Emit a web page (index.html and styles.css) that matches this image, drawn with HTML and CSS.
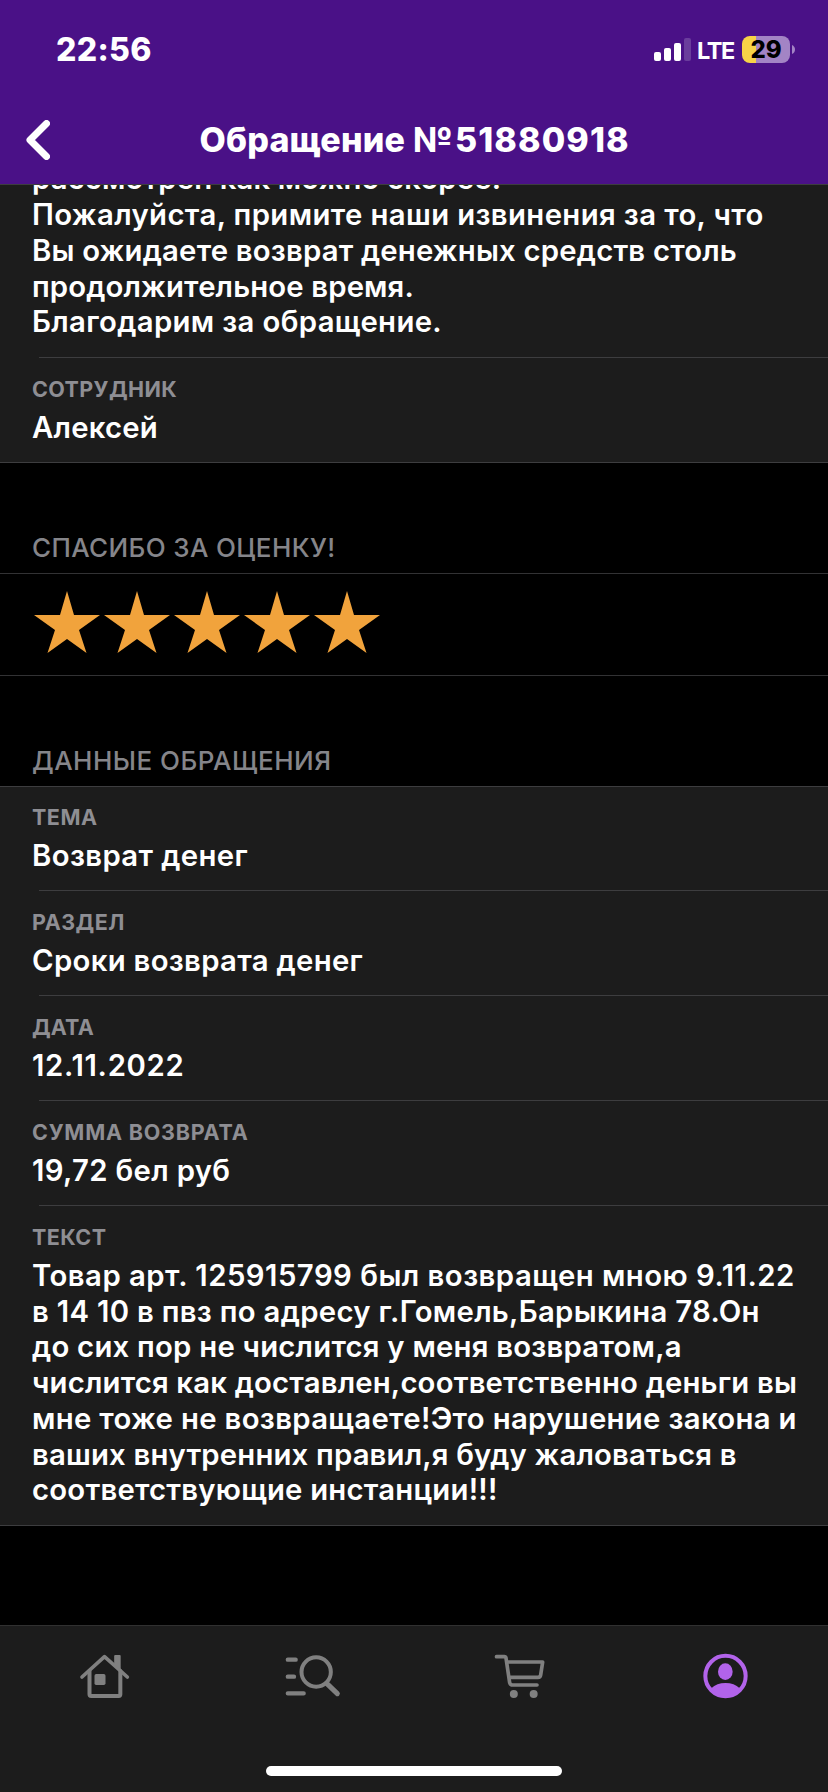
FILE: index.html
```html
<!DOCTYPE html>
<html lang="ru">
<head>
<meta charset="utf-8">
<title>Обращение №51880918</title>
<link rel="stylesheet" href="styles.css">
</head>
<body>
<div class="screen">
  <header class="header">
    <div class="status">
      <span class="time">22:56</span>
      <div class="status-right">
        <svg class="signal" viewBox="0 0 37 23"><g fill="#fff"><rect y="14" width="7" height="9" rx="2"/><rect x="10" y="10" width="7" height="13" rx="2"/><rect x="20" y="5" width="7" height="18" rx="2"/></g><rect x="30" width="7" height="23" rx="2" fill="#6a3d9c"/></svg>
        <span class="lte">LTE</span>
        <span class="battery"><span class="level">29</span></span>
        <svg class="nub" viewBox="0 0 3 9"><path d="M0 0Q3 1.5 3 4.5T0 9Z" fill="#a384c5"/></svg>
      </div>
    </div>
    <div class="titlebar">
      <svg class="back" viewBox="0 0 24 40"><path d="M20.500 3.500L4 20L20.500 36.500" fill="none" stroke="#fff" stroke-width="7" stroke-linecap="round" stroke-linejoin="round"/></svg>
      <h1 class="title"><span class="word">Обращение </span><span class="sign">№</span><span class="digits">51880918</span></h1>
    </div>
  </header>
  <main class="content">
    <section class="card reply">
      <div class="message">
        <span class="line r1">рассмотрен как можно скорее.</span>
        <span class="line r2">Пожалуйста, примите наши извинения за то, что</span>
        <span class="line r3">Вы ожидаете возврат денежных средств столь</span>
        <span class="line r4">продолжительное время.</span>
        <span class="line r5">Благодарим за обращение.</span>
      </div>
      <div class="row"><div class="label l1">СОТРУДНИК</div><div class="value"><span class="line v1">Алексей</span></div></div>
    </section>
    <h2 class="heading thanks">СПАСИБО ЗА ОЦЕНКУ!</h2>
    <div class="rating">
      <svg class="star" viewBox="0 0 66 62"><path d="M33 0L40 24H66L45 39L52.500 62L33 48L13.500 62L21 39L0 24H26Z"/></svg>
      <svg class="star" viewBox="0 0 66 62"><path d="M33 0L40 24H66L45 39L52.500 62L33 48L13.500 62L21 39L0 24H26Z"/></svg>
      <svg class="star" viewBox="0 0 66 62"><path d="M33 0L40 24H66L45 39L52.500 62L33 48L13.500 62L21 39L0 24H26Z"/></svg>
      <svg class="star" viewBox="0 0 66 62"><path d="M33 0L40 24H66L45 39L52.500 62L33 48L13.500 62L21 39L0 24H26Z"/></svg>
      <svg class="star" viewBox="0 0 66 62"><path d="M33 0L40 24H66L45 39L52.500 62L33 48L13.500 62L21 39L0 24H26Z"/></svg>
    </div>
    <h2 class="heading data">ДАННЫЕ ОБРАЩЕНИЯ</h2>
    <section class="card details">
      <div class="row first"><div class="label l2">ТЕМА</div><div class="value"><span class="line v2">Возврат денег</span></div></div>
      <div class="row"><div class="label l3">РАЗДЕЛ</div><div class="value"><span class="line v3">Сроки возврата денег</span></div></div>
      <div class="row"><div class="label l4">ДАТА</div><div class="value"><span class="line v4">12.11.2022</span></div></div>
      <div class="row"><div class="label l5">СУММА ВОЗВРАТА</div><div class="value"><span class="line v5">19,72 бел руб</span></div></div>
      <div class="row"><div class="label l6">ТЕКСТ</div><div class="value">
        <span class="line t1">Товар арт. 125915799 был возвращен мною 9.11.22</span>
        <span class="line t2">в 14 10 в пвз по адресу г.Гомель,Барыкина 78.Он</span>
        <span class="line t3">до сих пор не числится у меня возвратом,а</span>
        <span class="line t4">числится как доставлен,соответственно деньги вы</span>
        <span class="line t5">мне тоже не возвращаете!Это нарушение закона и</span>
        <span class="line t6">ваших внутренних правил,я буду жаловаться в</span>
        <span class="line t7">соответствующие инстанции!!!</span>
      </div></div>
    </section>
  </main>
  <nav class="tabbar">
    <div class="tabs">
      <div class="tab"><svg class="icon" viewBox="0 0 180 144"><path d="M24 78L91.500 17L160 78" stroke-width="11"/><path d="M46.500 60V130Q46.500 135 51.500 135H134Q139 135 139 130V60" stroke-width="12"/><path class="solid" d="M120.500 15q0-3 3-3h13.500q3 0 3 3v47l-19.500-19z"/><rect class="solid" x="61.500" y="69" width="33" height="33" rx="5"/></svg></div>
      <div class="tab"><svg class="icon" viewBox="0 0 180 144"><circle cx="105.500" cy="63" r="44" stroke-width="12"/><path d="M137 97L169 128" stroke-width="15"/><path d="M20.500 26H44M20.500 77H39M20.500 127H68" stroke-width="13"/></svg></div>
      <div class="tab"><svg class="icon" viewBox="0 0 180 144"><path d="M25.500 17H49Q53 17 54 21L65 95Q67 102 74 102H147M57 33H164L158 72Q157 79 150 79H63" stroke-width="11"/><circle class="solid" cx="77.500" cy="129" r="12"/><circle class="solid" cx="137" cy="129" r="12"/></svg></div>
      <div class="tab active"><svg class="icon" viewBox="0 0 180 144"><circle cx="91.500" cy="75" r="60.500" stroke-width="12"/><ellipse class="solid" cx="91" cy="62" rx="22" ry="25"/><path class="solid" d="M49 112Q65 96 91.500 96T134 112Q116 138 91.500 138T49 112Z"/></svg></div>
    </div>
    <div class="home-indicator"></div>
  </nav>
</div>
</body>
</html>
```
FILE: styles.css
```css
* { box-sizing: border-box; }
body { margin: 0; background: #000; color: #fff; font-family: Inter, "Noto Sans", sans-serif; }
.screen { width: 828px; height: 1792px; display: flex; flex-direction: column; overflow: hidden; }
.header { height: 184px; flex: none; background: #4a1187; }
.status { height: 96px; padding: 0 33px 0 56px; display: flex; justify-content: space-between; }
.time { padding-top: 30px; font-size: 32px; line-height: 40px; font-weight: 800; letter-spacing: 0.3px; }
.status-right { display: flex; align-items: flex-start; }
.signal { width: 37px; height: 23px; margin: 38px 6px 0 0; }
.lte { width: 45px; margin-top: 36px; font-size: 23.5px; line-height: 29px; font-weight: 650; letter-spacing: -1.4px; }
.battery { width: 48px; height: 27px; margin: 36px 2px 0 0; border-radius: 8px; background: linear-gradient(90deg, #f7d347 14px, #a384c5 14px); color: #000; text-align: center; }
.level { display: block; font-size: 24px; line-height: 27px; font-weight: 800; }
.nub { width: 3px; height: 9px; margin-top: 45px; }
.titlebar { height: 88px; display: flex; align-items: flex-start; padding-left: 26px; }
.back { width: 24px; height: 40px; margin-top: 24px; }
.title { margin: 24px 0 0 149.5px; display: flex; font-size: 34px; line-height: 40px; font-weight: 800; white-space: pre; }
.word { width: 213.5px; letter-spacing: 0.2px; }
.sign { width: 42px; transform: scaleX(1.05); transform-origin: left; }
.digits { letter-spacing: 1.1px; }
.content { height: 1441px; overflow: hidden; display: flex; flex-direction: column; }
.card { flex: none; background: #1c1c1c; border-bottom: 1px solid #3d3d3f; overflow: hidden; }
.reply { height: 279px; border-top: 1px solid #3d3d3f; }
.message { height: 172px; padding-left: 32px; display: flex; flex-direction: column; justify-content: flex-end; padding-bottom: 17px; }
.line { display: block; font-size: 29.3px; line-height: 35.7px; font-weight: 560; white-space: nowrap; }
.row { padding: 19px 0 16.3px 32px; border-top: 1px solid; border-image: linear-gradient(90deg, transparent 40px, #3d3d3f 40px) 1; }
.row.first { padding-top: 18px; border-image: linear-gradient(#3d3d3f, #3d3d3f) 1; }
.label { height: 24px; margin-bottom: 9px; font-size: 21.5px; line-height: 24px; font-weight: 650; color: #8e8e93; }
.heading { flex: none; margin: 0; padding-left: 32px; font-size: 26px; line-height: 32px; font-weight: 530; color: #85858a; }
.thanks { height: 110px; padding-top: 69px; letter-spacing: 0.37px; }
.rating { flex: none; height: 103px; padding: 17px 0 0 34px; display: flex; gap: 4px; border-top: 1px solid #323234; border-bottom: 1px solid #323234; }
.star { width: 66px; height: 62px; fill: #f1a33c; }
.data { height: 110px; padding-top: 69px; letter-spacing: 0.48px; }
.details { height: 740px; }
.r1 { letter-spacing: 0.12px; }
.r2 { letter-spacing: 0.38px; }
.r3 { letter-spacing: 0.19px; }
.r4 { letter-spacing: 0.14px; }
.r5 { letter-spacing: 0.35px; }
.v1 { letter-spacing: 0.23px; }
.v2 { letter-spacing: 0.38px; }
.v3 { letter-spacing: 0.31px; }
.v4 { letter-spacing: 0.69px; }
.v5 { letter-spacing: 0.33px; }
.t1 { letter-spacing: 0.48px; }
.t2 { letter-spacing: 0.3px; }
.t3 { letter-spacing: 0.23px; }
.t4 { letter-spacing: 0.18px; }
.t5 { letter-spacing: 0.33px; }
.t6 { letter-spacing: 0.17px; }
.t7 { letter-spacing: 0.22px; }
.l1 { letter-spacing: 0.38px; }
.l2 { letter-spacing: 0.5px; }
.l3 { letter-spacing: 0.5px; }
.l4 { letter-spacing: 0.15px; }
.l5 { letter-spacing: 0.77px; }
.l6 { letter-spacing: 0.44px; }
.tabbar { flex: none; height: 167px; background: #1c1c1c; border-top: 1px solid #303030; }
.tabs { height: 140px; display: grid; grid-template-columns: repeat(4, 1fr); }
.tab { display: flex; justify-content: center; align-items: flex-start; padding-top: 25px; color: #808080; }
.active { color: #b263ea; }
.icon { width: 60px; height: 48px; fill: none; stroke: currentColor; stroke-linecap: round; stroke-linejoin: round; }
.solid { fill: currentColor; stroke: none; }
.home-indicator { width: 296px; height: 10px; margin: 0 auto; border-radius: 5px; background: #fff; }
```
